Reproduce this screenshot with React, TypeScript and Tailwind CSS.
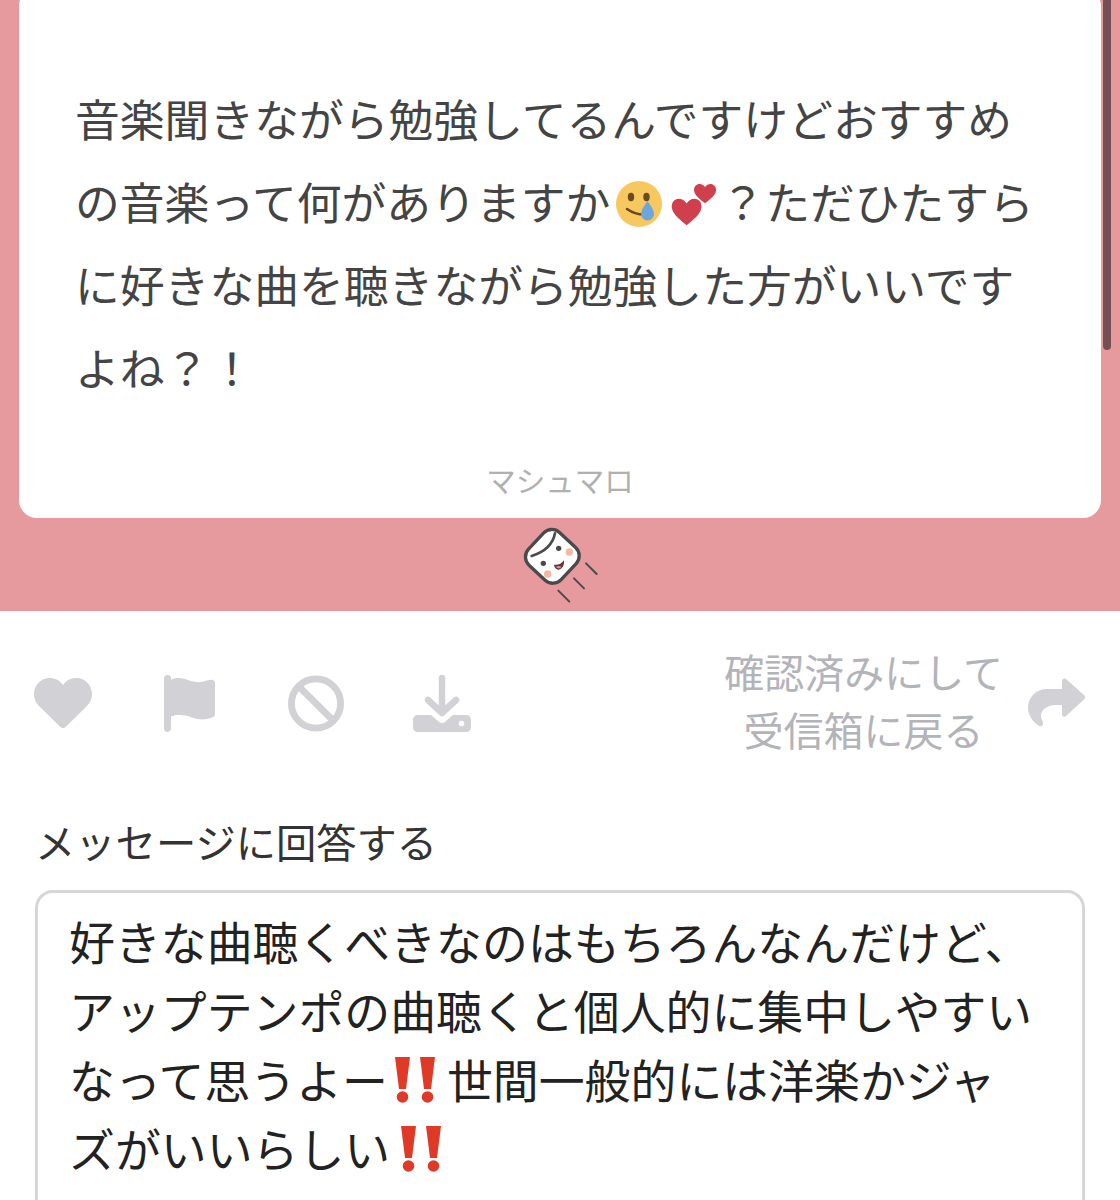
const jp = { fontFamily: '"Noto Sans CJK JP", "Noto Sans", sans-serif' };

function CryEmoji() {
  return (
    <svg viewBox="0 0 56 56" className="inline-block h-[56px] w-[56px] align-middle -mt-[6px]">
      <circle cx="29" cy="27" r="23" fill="#f7c860" />
      <ellipse cx="21" cy="20" rx="3.2" ry="4.2" fill="#6b4a1e" />
      <ellipse cx="36.500" cy="20" rx="3.2" ry="4.2" fill="#6b4a1e" />
      <path d="M17 32c5 3.500 11 5.500 17 5.500" fill="none" stroke="#6b4a1e" strokeWidth="2.6" strokeLinecap="round" />
      <path d="M37.500 24c3 4.500 6.500 9 6.500 13a6.500 6.500 0 0 1-13 0c0-4 3.500-8.500 6.500-13z" fill="#6da5dd" />
    </svg>
  );
}

const heartPath = "M12 22C5 16 0 12 0 6.500 0 2.800 2.800 0 6 0c2.500 0 4.500 1.300 6 3.500C13.500 1.300 15.500 0 18 0c3.200 0 6 2.800 6 6.500C24 12 19 16 12 22z";

function HeartsEmoji() {
  return (
    <svg viewBox="0 0 54 56" className="inline-block h-[56px] w-[54px] align-middle -mt-[6px]">
      <path d={heartPath} transform="translate(28 7) scale(0.92 0.88)" fill="#d0404c" />
      <path d={heartPath} transform="translate(5 21) scale(1.3 1.28)" fill="#d0404c" stroke="#fff" strokeWidth="1" />
    </svg>
  );
}

function DoubleBang({ className }: { className: string }) {
  return (
    <svg viewBox="0 0 46 46" className={`inline-block h-[46px] w-[46px] align-middle ${className}`}>
      <path d="M2 0h15l-4 32H6z" fill="#df3a27" />
      <circle cx="9.500" cy="40" r="5.800" fill="#df3a27" />
      <path d="M27 0h15l-4 32h-7z" fill="#df3a27" />
      <circle cx="34.500" cy="40" r="5.800" fill="#df3a27" />
    </svg>
  );
}

function Marshmallow() {
  return (
    <svg viewBox="120 225 240 240" className="h-[80px] w-[80px]">
      <rect x="150" y="252" width="134" height="134" rx="34" transform="rotate(43 217 319)" fill="#fff" stroke="#4a4a4a" strokeWidth="10" />
      <path d="M155 318c26-8 62-26 70-68" fill="none" stroke="#4a4a4a" strokeWidth="8" strokeLinecap="round" />
      <circle cx="236" cy="295" r="8" fill="#4a4a4a" />
      <circle cx="190" cy="340" r="8" fill="#4a4a4a" />
      <circle cx="268" cy="306" r="11" fill="#f2b8a2" />
      <circle cx="203" cy="372" r="11" fill="#f2b8a2" />
      <path d="M222 344c10 2 22-1 30-13 2 12-4 26-16 28-8 0-13-7-14-15z" fill="#5a3a3a" />
      <path d="M228 350c5-3 12-3 16 1-4 5-11 6-16-1z" fill="#e58f8f" />
      <path d="M318 340l32 32M282 385l30 30M235 422l33 33" stroke="#4a4a4a" strokeWidth="6" strokeLinecap="round" />
    </svg>
  );
}

export default function App() {
  return (
    <div className="h-[1200px] w-[1120px] overflow-hidden bg-white" style={jp}>
      <div className="relative flex h-[611px] flex-col bg-[#e79a9e]">
        <div className="mx-[19px] -mt-3 flex h-[530px] flex-col rounded-[18px] bg-white pl-[56px]">
          <p className="mt-[88px] whitespace-nowrap text-[44.8px] leading-[83px] text-[#444]">
            音楽聞きながら勉強してるんですけどおすすめ
            <br />
            の音楽って何がありますか
            <CryEmoji />
            <HeartsEmoji />
            ？ただひたすら
            <br />
            に好きな曲を聴きながら勉強した方がいいです
            <br />
            よね？！
          </p>
          <div className="mt-auto -ml-[56px] pb-[19px] text-center text-[29.5px] leading-[40px] text-[#b0b0b0]">
            マシュマロ
          </div>
        </div>
        <div className="flex justify-center pt-[7px]">
          <Marshmallow />
        </div>
        <div className="absolute right-[9px] top-0 h-[350px] w-[8px] rounded-b-full bg-[#745055]" />
      </div>

      <div className="mt-[34px] flex h-[116px] items-center justify-between px-[34px]">
        <div className="flex items-center gap-[72px]">
          <svg viewBox="0 0 58 50" className="h-[50px] w-[58px]">
            <path d="M29 50c-1 0-2-.4-2.800-1.200L5 28C1.500 24.500 0 20.500 0 16 0 7 7 0 15.500 0 21 0 26 2.500 29 7c3-4.500 8-7 13.500-7C51 0 58 7 58 16c0 4.500-1.500 8.500-5 12L31.800 48.800C31 49.600 30 50 29 50z" fill="#d1d1d6" />
          </svg>
          <svg viewBox="0 0 51 57" className="h-[57px] w-[51px]">
            <path d="M3.500 0C5.500 0 7 1.500 7 3.500V53.500C7 55.500 5.500 57 3.500 57S0 55.500 0 53.500V3.500C0 1.500 1.500 0 3.500 0z" fill="#d1d1d6" />
            <path d="M7 5c5-3 11-2 17 0 7 2.500 12 3 19 .5 4-1.500 8-1 8 2.500v31c0 2-1 3-3 3.500-7 2.500-13 2.500-20 0-8-3-15-3-21-1z" fill="#d1d1d6" />
          </svg>
          <svg viewBox="0 0 58 58" className="h-[57px] w-[58px]">
            <circle cx="29" cy="29" r="25" fill="none" stroke="#d1d1d6" strokeWidth="7" />
            <path d="M11 11l36 36" stroke="#d1d1d6" strokeWidth="7" />
          </svg>
          <svg viewBox="0 0 58 57" className="-ml-1 h-[57px] w-[58px]">
            <path d="M29 3v34M15 25l14 13 14-13" fill="none" stroke="#d1d1d6" strokeWidth="6.500" strokeLinecap="round" strokeLinejoin="round" />
            <path d="M5 40h13l8 7c2 1.500 4 1.500 6 0l8-7h13c3 0 5 2 5 5v7c0 3-2 5-5 5H5c-3 0-5-2-5-5v-7c0-3 2-5 5-5z" fill="#d1d1d6" />
            <circle cx="48.500" cy="48.500" r="2.800" fill="#fff" />
          </svg>
        </div>
        <div className="flex items-center gap-[25px]">
          <div className="mb-[6px] text-center text-[40px] leading-[58px] text-[#b3b3ba]">
            確認済みにして
            <br />
            受信箱に戻る
          </div>
          <svg viewBox="0 0 58 50" className="h-[50px] w-[58px]">
            <path d="M34 3c0-2 2-3 4-2L56 17c1.500 1.200 1.500 3 0 4.500L38 38c-2 1.500-4 .5-4-2V27H28C20 27 13 31 13 38c0 2 1 4 2 6.500 .8 2.500-2 5-4 3.500C5 44 0 37 0 30 0 19 8 11 19 11H34z" fill="#d1d1d6" />
          </svg>
        </div>
      </div>

      <div className="mt-[51px] pl-[35px] text-[40.3px] leading-[58px] text-[#333]">メッセージに回答する</div>

      <div className="mx-[35px] mt-[20px] h-[400px] whitespace-nowrap rounded-[18px] border-[3px] border-[#d6d6d6] pl-[31px] pt-[13px] text-[45.9px] leading-[69px] text-[#222]">
        好きな曲聴くべきなのはもちろんなんだけど、
        <br />
        アップテンポの曲聴くと個人的に集中しやすい
        <br />
        なって思うよー
        <DoubleBang className="-mt-[11px] ml-[5px] mr-[8px]" />
        世間一般的には洋楽かジャ
        <br />
        ズがいいらしい
        <DoubleBang className="-mt-[11px] ml-[9px]" />
      </div>
    </div>
  );
}
